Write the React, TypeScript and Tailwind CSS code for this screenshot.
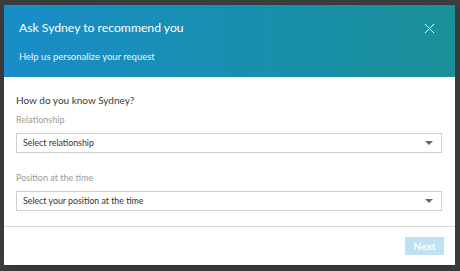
import { X } from 'lucide-react';

export default function App() {
    return (
        <main className="h-[271px] w-[460px] bg-[#3a3c3d] pt-[5px] pl-[4px] font-['Lato',sans-serif]">
            <div className="w-[451px] h-[260px] bg-white flex flex-col shadow-lg">
                <header className="h-[72px] bg-gradient-to-r from-[#1a8dc8] to-[#1a9098] px-[15px] pt-[14px] text-white">
                    <div className="flex items-center justify-between h-[18px]">
                        <h1 className="text-[12.2px] leading-[18px]">Ask Sydney to recommend you</h1>
                        <X size={17} strokeWidth={1.4} className="mr-[2px]" />
                    </div>
                    <p className="mt-[14px] text-[9.5px] leading-[12px] text-white/90">Help us personalize your request</p>
                </header>

                <section className="px-[12px] pr-[13px] pt-[15px] flex-1 border-b border-[#d9d9d9]">
                    <h2 className="text-[10px] leading-[16px] text-[#3a3a3a]">How do you know Sydney?</h2>
                    <Field label="Relationship" placeholder="Select relationship" />
                    <div className="h-[13px]" />
                    <Field label="Position at the time" placeholder="Select your position at the time" />
                </section>

                <footer className="h-[38px] flex items-center justify-end pr-[11px]">
                    <button className="h-[18px] w-[39px] bg-[#bfe1f1] text-white text-[10px] font-bold">Next</button>
                </footer>
            </div>
        </main>
    );
}

const Field = ({ label, placeholder }: { label: string; placeholder: string }) => {
    return (
        <div className="mt-[5px]">
            <div className="text-[9px] leading-[14px] text-[#9a9a9a]">{label}</div>
            <div className="mt-[6px] h-[20px] border border-[#cfcfcf] flex items-center justify-between pl-[6px] pr-[8px]">
                <span className="text-[8.8px] text-[#333]">{placeholder}</span>
                <svg width="8" height="4" viewBox="0 0 8 4">
                    <path d="M0 0 L8 0 L4 4 Z" fill="#666" />
                </svg>
            </div>
        </div>
    );
};
